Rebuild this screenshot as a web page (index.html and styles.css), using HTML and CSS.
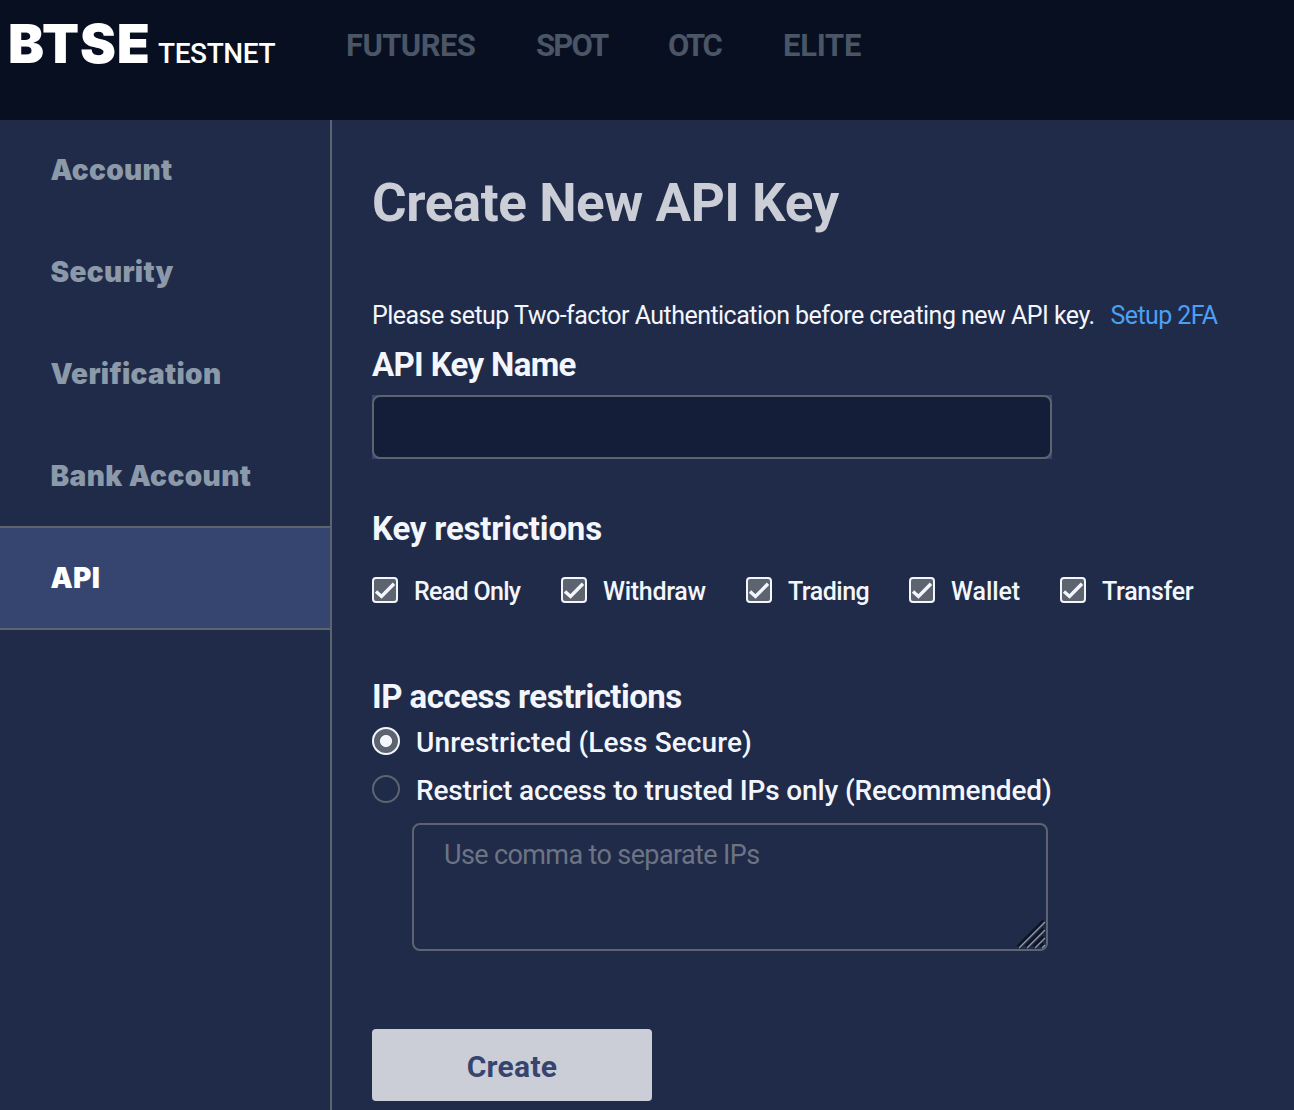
FILE: index.html
```html
<!DOCTYPE html>
<html lang="en">
<head>
<meta charset="utf-8">
<title>Create New API Key</title>
<link rel="stylesheet" href="styles.css">
</head>
<body>
<header class="topbar">
  <div class="brand"><span class="logo">BTSE</span><span class="env">TESTNET</span></div>
  <nav class="nav">
    <a class="nav-futures">FUTURES</a>
    <a class="nav-spot">SPOT</a>
    <a class="nav-otc">OTC</a>
    <a class="nav-elite">ELITE</a>
  </nav>
</header>
<div class="layout">
  <aside class="sidebar">
    <a class="item">Account</a>
    <a class="item">Security</a>
    <a class="item">Verification</a>
    <a class="item before-active">Bank Account</a>
    <a class="item active">API</a>
  </aside>
  <main class="content">
    <h1 class="title">Create New API Key</h1>
    <p class="notice"><span>Please setup Two-factor Authentication before creating new API key.</span><a class="link">Setup 2FA</a></p>
    <h2 class="heading name-heading">API Key Name</h2>
    <div class="field"><input class="input" type="text" aria-label="API Key Name"></div>
    <h2 class="heading keys-heading">Key restrictions</h2>
    <div class="checks">
      <label class="check check-read"><svg class="box" viewBox="0 0 26 26"><rect x="1" y="1" width="24" height="24" rx="3"/><path d="M4 14.5L9.5 19.5L22 6.8"/></svg><span>Read Only</span></label>
      <label class="check check-withdraw"><svg class="box" viewBox="0 0 26 26"><rect x="1" y="1" width="24" height="24" rx="3"/><path d="M4 14.5L9.5 19.5L22 6.8"/></svg><span>Withdraw</span></label>
      <label class="check check-trading"><svg class="box" viewBox="0 0 26 26"><rect x="1" y="1" width="24" height="24" rx="3"/><path d="M4 14.5L9.5 19.5L22 6.8"/></svg><span>Trading</span></label>
      <label class="check check-wallet"><svg class="box" viewBox="0 0 26 26"><rect x="1" y="1" width="24" height="24" rx="3"/><path d="M4 14.5L9.5 19.5L22 6.8"/></svg><span>Wallet</span></label>
      <label class="check check-transfer"><svg class="box" viewBox="0 0 26 26"><rect x="1" y="1" width="24" height="24" rx="3"/><path d="M4 14.5L9.5 19.5L22 6.8"/></svg><span>Transfer</span></label>
    </div>
    <h2 class="heading ip-heading">IP access restrictions</h2>
    <div class="radios">
      <label class="radio radio-open"><span class="dot selected"></span><span class="radio-text">Unrestricted (Less Secure)</span></label>
      <label class="radio radio-limited"><span class="dot"></span><span class="radio-text">Restrict access to trusted IPs only (Recommended)</span></label>
    </div>
    <div class="area-wrap">
      <textarea class="area" placeholder="Use comma to separate IPs"></textarea>
      <svg class="grip" viewBox="0 0 30 30"><g class="grip-dark"><path d="M0.5 26.5L26.5 0.5"/><path d="M8.5 26.5L26.5 8.5"/><path d="M16.5 26.5L26.5 16.5"/><path d="M23.5 26.5L26.5 23.5"/></g><g class="grip-light"><path d="M2 28L28 2"/><path d="M10 28L28 10"/><path d="M18 28L28 18"/><path d="M25 28L28 25"/></g></svg>
    </div>
    <button class="create" type="button">Create</button>
  </main>
</div>
</body>
</html>
```
FILE: styles.css
```css
* { box-sizing: border-box; }
body {
  margin: 0;
  height: 1110px;
  overflow: hidden;
  background: #202b49;
  color: #f3f6fc;
  font-family: Roboto, "Noto Sans", sans-serif;
}
h1, h2, p { margin: 0; }

.topbar { display: flex; height: 120px; background: #080f20; }
.brand {
  display: flex;
  align-items: baseline;
  width: 346px;
  padding: 11px 0 0 8px;
  color: #fff;
}
.logo { width: 150px; font: 900 54px/66px Inter, sans-serif; letter-spacing: 0.9px; }
.env { font-size: 28px; font-weight: 500; letter-spacing: -0.4px; white-space: nowrap; }
.nav {
  display: flex;
  padding-top: 26px;
  color: #4a5565;
  font-size: 31px;
  font-weight: 700;
  line-height: 40px;
}
.nav-futures { width: 190px; letter-spacing: -0.6px; }
.nav-spot { width: 132px; letter-spacing: -1.8px; }
.nav-otc { width: 115px; letter-spacing: -2.3px; }
.nav-elite { letter-spacing: -0.25px; }

.layout { display: flex; height: 990px; }
.sidebar {
  width: 332px;
  flex: none;
  border-right: 2px solid #5d6470;
  color: #8b99a9;
  font: 900 28px Inter, sans-serif;
  letter-spacing: 0.3px;
}
.item {
  display: flex;
  align-items: center;
  height: 102px;
  padding-left: 50.5px;
  border-bottom: 2px solid transparent;
}
.before-active { border-bottom-color: #5d6470; letter-spacing: 0.4px; }
.active { background: #36456f; border-bottom-color: #5d6470; color: #fff; }

.content { flex: 1; padding: 53px 0 0 40px; }
.title {
  color: #cbced6;
  font-size: 53px;
  line-height: 60px;
  letter-spacing: -0.45px;
}
.notice {
  display: flex;
  gap: 16px;
  margin-top: 68px;
  font-size: 25px;
  line-height: 30px;
  letter-spacing: -0.53px;
  white-space: nowrap;
}
.link { color: #4ba0f4; letter-spacing: -0.6px; }
.heading { font-size: 33px; line-height: 40px; }
.name-heading { margin-top: 14px; letter-spacing: -0.66px; }
.keys-heading { margin-top: 50px; letter-spacing: -0.17px; }
.ip-heading { margin-top: 74px; letter-spacing: -0.5px; }

.field { width: 680px; height: 64px; margin-top: 10px; background: #36456f; }
.input {
  display: block;
  width: 100%;
  height: 100%;
  padding: 0 16px;
  border: 2px solid #5d6470;
  border-radius: 8px;
  background: #141e38;
  color: #f3f6fc;
  font: 27px Roboto, sans-serif;
}

.checks { display: flex; margin-top: 28px; }
.check {
  display: flex;
  gap: 16px;
  height: 26px;
  font-size: 25px;
  font-weight: 500;
  line-height: 30px;
  white-space: nowrap;
}
.check-read { width: 189px; letter-spacing: -0.7px; }
.check-withdraw { width: 185px; letter-spacing: -0.3px; }
.check-trading { width: 163px; letter-spacing: -0.5px; }
.check-wallet { width: 151px; letter-spacing: -0.1px; }
.check-transfer { letter-spacing: -0.3px; }
.box { width: 26px; height: 26px; flex: none; fill: #5d6470; stroke: #f3f6fc; stroke-width: 2; }
.box path { fill: none; stroke-width: 3.4; }

.radios { display: flex; flex-direction: column; gap: 20px; margin-top: 10px; }
.radio {
  display: flex;
  gap: 16px;
  height: 28px;
  font-size: 28px;
  font-weight: 500;
  line-height: 31px;
  white-space: nowrap;
}
.radio-open { letter-spacing: 0.11px; }
.radio-limited { letter-spacing: -0.14px; }
.dot { width: 28px; height: 28px; flex: none; border: 2px solid #5d6470; border-radius: 50%; }
.selected {
  border-color: #f3f6fc;
  background: radial-gradient(circle, #f3f6fc 5.6px, #5d6470 6.4px);
}

.area-wrap { position: relative; width: 636px; height: 128px; margin: 20px 0 0 40px; }
.area {
  display: block;
  width: 100%;
  height: 100%;
  padding: 14px 30px;
  border: 2px solid #5d6470;
  border-radius: 8px;
  background: transparent;
  color: #f3f6fc;
  font: 27px/32px Roboto, sans-serif;
  letter-spacing: -0.62px;
  resize: none;
}
.area::placeholder { color: #6c7484; opacity: 1; }
.grip { position: absolute; right: 1px; bottom: 1px; width: 30px; height: 30px; fill: none; }
.grip-dark { stroke: #0d1424; stroke-width: 2.6; }
.grip-light { stroke: #9399a8; stroke-width: 1.2; }

.create {
  display: block;
  width: 280px;
  height: 72px;
  margin-top: 78px;
  padding: 3px 0 0;
  border: 0;
  border-radius: 4px;
  background: #cbced6;
  color: #36456f;
  font: 700 30px Roboto, sans-serif;
  letter-spacing: 0.3px;
}
```
